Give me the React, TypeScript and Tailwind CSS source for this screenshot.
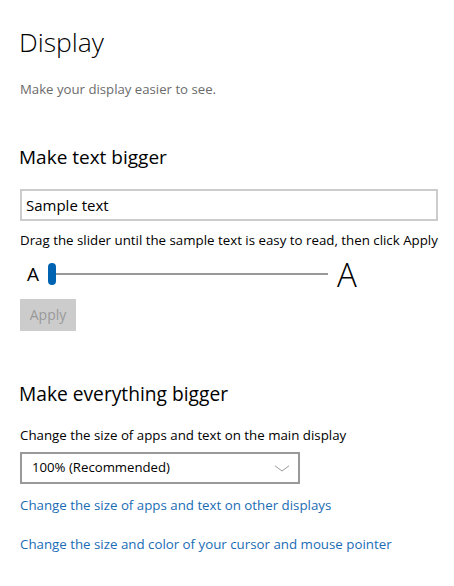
import React from 'react'

const font = "font-['Open_Sans','Noto_Sans',sans-serif]"

function Chevron() {
  return (
    <svg width="16" height="7" viewBox="0 0 16 7" className="text-[#999999]">
      <path d="M1 0.8 L8 6 L15 0.8" fill="none" stroke="currentColor" strokeWidth="1" />
    </svg>
  )
}

export default function App() {
  return (
    <div className={`w-[454px] h-[586px] bg-white pl-5 text-black ${font}`}>
      {/* Header */}
      <h1 className="ml-[-1px] pt-[22px] text-[26.5px] font-light leading-[40px]">Display</h1>
      <p className="mt-[17px] text-[13.2px] leading-[20px] text-[#6b6b6b]">Make your display easier to see.</p>

      {/* Make text bigger */}
      <h2 className="ml-[-1px] mt-[44px] text-[19px] leading-[28px]">Make text bigger</h2>
      <div className="mt-[18px] w-[418px] h-[32px] border-2 border-[#cccccc] flex items-center px-[4px] text-[15px]">
        Sample text
      </div>
      <p className="mt-[9px] text-[13.3px] leading-[20px]">
        Drag the slider until the sample text is easy to read, then click Apply
      </p>
      <div className="mt-[8px] h-[32px] flex items-center">
        <span className="ml-[7px] w-[21px] text-[19px] leading-none">A</span>
        <div className="w-[8px] h-[22px] rounded-full bg-[#0063b1]" />
        <div className="w-[272px] h-[2px] bg-[#999999]" />
        <span className="ml-[9px] text-[33px] font-light leading-none">A</span>
      </div>
      <button className="mt-[9px] w-[56px] h-[32px] bg-[#cccccc] text-[#999999] text-[14px] leading-none">
        Apply
      </button>

      {/* Make everything bigger */}
      <h2 className="ml-[-1px] mt-[49px] text-[19.2px] leading-[28px]">Make everything bigger</h2>
      <p className="mt-[17px] text-[13.3px] leading-[20px]">Change the size of apps and text on the main display</p>
      <div className="mt-[7px] w-[280px] h-[32px] border-2 border-[#999999] flex items-center justify-between pl-[10px] pr-[8px] text-[13.2px]">
        <span>100% (Recommended)</span>
        <Chevron />
      </div>
      <a className="block mt-[11px] text-[13.3px] leading-[20px] text-[#1a6db5]">
        Change the size of apps and text on other displays
      </a>
      <a className="block mt-[19px] text-[13.3px] leading-[20px] text-[#1a6db5]">
        Change the size and color of your cursor and mouse pointer
      </a>
    </div>
  )
}
